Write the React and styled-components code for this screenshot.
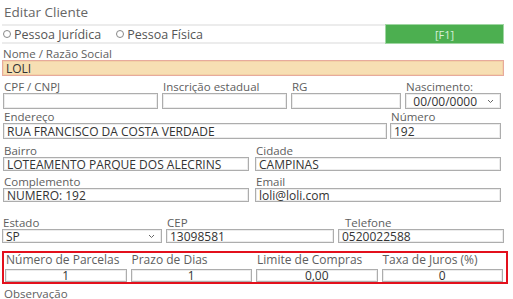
import styled, { createGlobalStyle } from "styled-components";

const GlobalStyle = createGlobalStyle`
  html, body {
    margin: 0;
    padding: 0;
    background: #fff;
    font-family: "Open Sans", "Noto Sans", sans-serif;
    overflow: hidden;
  }
`;

function Chevron() {
  return (
    <svg width="7" height="5" viewBox="0 0 7 5">
      <path d="M1 1 L3.5 3.5 L6 1" fill="none" stroke="#666" strokeWidth="1" />
    </svg>
  );
}

function Field({ label, value, align, children, labelOffset }) {
  return (
    <FieldBox>
      <Label $offset={labelOffset}>{label}</Label>
      {children || <Input defaultValue={value} readOnly $align={align} />}
    </FieldBox>
  );
}

export default function App() {
  return (
    <Page>
      <GlobalStyle />
      <Title>Editar Cliente</Title>
      <Bar>
        <RadioGroup>
          <Radio>
            <Dot />
            Pessoa Jurídica
          </Radio>
          <Radio>
            <Dot />
            Pessoa Física
          </Radio>
        </RadioGroup>
        <KeyButton>[F1]</KeyButton>
      </Bar>

      <Row $mt={4} $cols="1fr" $pr={0}>
        <FieldBox>
          <Label>Nome / Razão Social</Label>
          <Input defaultValue="LOLI" readOnly $highlight />
        </FieldBox>
      </Row>

      <Row $mt={5} $cols="155px 125px 110px 1fr" $gap={4}>
        <Field label="CPF / CNPJ" value="" />
        <Field label="Inscrição estadual" value="" />
        <Field label="RG" value="" />
        <Field label="Nascimento:">
          <SelectBox $center>
            <span>00/00/0000</span>
            <Chevron />
          </SelectBox>
        </Field>
      </Row>

      <Row $mt={2} $cols="1fr 111px" $gap={3}>
        <Field label="Endereço" value="RUA FRANCISCO DA COSTA VERDADE" />
        <Field label="Número" value="192" />
      </Row>

      <Row $mt={6} $cols="1fr 1fr" $gap={6} $h={14}>
        <Field label="Bairro" value="LOTEAMENTO PARQUE DOS ALECRINS" />
        <Field label="Cidade" value="CAMPINAS" />
      </Row>

      <Row $mt={5} $cols="1fr 1fr" $gap={6} $h={14}>
        <Field label="Complemento" value="NUMERO: 192" />
        <Field label="Email" value="loli@loli.com" />
      </Row>

      <Row $mt={15} $cols="160px 168px 1fr" $gap={4} $h={14} $pr={0}>
        <Field label="Estado">
          <SelectBox>
            <span>SP</span>
            <Chevron />
          </SelectBox>
        </Field>
        <Field label="CEP" value="13098581" />
        <Field label="Telefone" value="0520022588" labelOffset={6} />
      </Row>

      <Highlight>
        <Row $mt={0} $cols="repeat(4, 1fr)" $gap={4} $h={13} $pr={0}>
          <Field label="Número de Parcelas" value="1" align="center" />
          <Field label="Prazo de Dias" value="1" align="center" />
          <Field label="Limite de Compras" value="0,00" align="center" />
          <Field label="Taxa de Juros (%)" value="0" align="center" />
        </Row>
      </Highlight>

      <Note>Observação</Note>
    </Page>
  );
}

const Page = styled.div`
  width: 513px;
  height: 299px;
  box-sizing: border-box;
  padding: 0 9px 0 2px;
  display: flex;
  flex-direction: column;
`;

const Title = styled.div`
  height: 25px;
  line-height: 24px;
  padding-left: 2px;
  font-size: 13.5px;
  color: #666;
`;

const Bar = styled.div`
  display: flex;
  height: 20px;
`;

const RadioGroup = styled.div`
  flex: 1;
  display: flex;
  align-items: center;
  gap: 15px;
  border-top: 2px solid #ececec;
  border-bottom: 2px solid #ececec;
  padding-left: 1px;
`;

const Radio = styled.label`
  display: flex;
  align-items: center;
  gap: 3px;
  font-size: 12.5px;
  color: #555;
`;

const Dot = styled.span`
  width: 6px;
  height: 6px;
  border: 1px solid #888;
  border-radius: 50%;
  background: #fff;
`;

const KeyButton = styled.div`
  width: 119px;
  box-sizing: border-box;
  display: flex;
  align-items: center;
  justify-content: center;
  background: #4caf50;
  border: 1px solid #9fd6a2;
  color: #d9f0da;
  font-size: 11px;
`;

const Row = styled.div`
  display: grid;
  grid-template-columns: ${(p) => p.$cols};
  column-gap: ${(p) => p.$gap || 0}px;
  margin-top: ${(p) => p.$mt}px;
  padding-left: ${(p) => (p.$pr === 0 ? 0 : 1)}px;
  padding-right: ${(p) => (p.$pr === 0 ? 0 : 3)}px;
  --h: ${(p) => p.$h || 16}px;
`;

const FieldBox = styled.div`
  display: flex;
  flex-direction: column;
  min-width: 0;
`;

const Label = styled.label`
  display: block;
  height: 12px;
  line-height: 12px;
  font-size: 11.5px;
  color: #5e5e5e;
  white-space: nowrap;
  padding-left: ${(p) => 1 + (p.$offset || 0)}px;
`;

const Note = styled(Label)`
  margin-top: 4px;
  padding-left: 2px;
`;

const Input = styled.input`
  box-sizing: border-box;
  width: 100%;
  height: var(--h);
  margin: 0;
  padding: 0 3px;
  font-family: "Open Sans", "Noto Sans", sans-serif;
  font-size: 12px;
  color: #333;
  text-align: ${(p) => p.$align || "left"};
  background: ${(p) => (p.$highlight ? "#f7dfb3" : "#fff")};
  border: 1px solid ${(p) => (p.$highlight ? "#e7aa9c" : "#adadad")};
  box-shadow: inset 0 0 0 1px ${(p) => (p.$highlight ? "#f3d2a6" : "#ececec")};
  outline: none;
`;

const SelectBox = styled.div`
  box-sizing: border-box;
  height: var(--h);
  display: flex;
  align-items: center;
  justify-content: ${(p) => (p.$center ? "flex-end" : "space-between")};
  gap: ${(p) => (p.$center ? "10px" : "0")};
  padding: 0 6px 0 3px;
  font-size: 12px;
  color: #333;
  border: 1px solid #adadad;
  box-shadow: inset 0 0 0 1px #ececec;
`;

const Highlight = styled.div`
  margin-top: 8px;
  margin-right: -4px;
  height: 39px;
  box-sizing: border-box;
  border: 2px solid #e3101c;
  padding: 1px 3px 0 1px;

  label {
    margin-bottom: 3px;
    font-size: 12px;
  }
`;
